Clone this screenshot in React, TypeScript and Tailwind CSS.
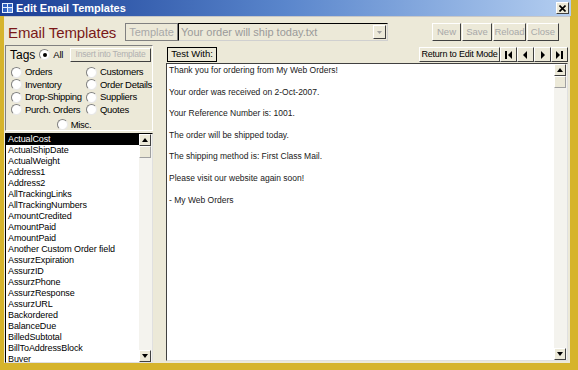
import React from "react";

const FONT = { fontFamily: '"Liberation Sans", Arial, sans-serif' };

const fields = [
  "ActualCost",
  "ActualShipDate",
  "ActualWeight",
  "Address1",
  "Address2",
  "AllTrackingLinks",
  "AllTrackingNumbers",
  "AmountCredited",
  "AmountPaid",
  "AmountPaid",
  "Another Custom Order field",
  "AssurzExpiration",
  "AssurzID",
  "AssurzPhone",
  "AssurzResponse",
  "AssurzURL",
  "Backordered",
  "BalanceDue",
  "BilledSubtotal",
  "BillToAddressBlock",
  "Buyer",
];

const lines = [
  "Thank you for ordering from My Web Orders!",
  "Your order was received on 2-Oct-2007.",
  "Your Reference Number is: 1001.",
  "The order will be shipped today.",
  "The shipping method is: First Class Mail.",
  "Please visit our website again soon!",
  "- My Web Orders",
];

function Radio({ checked, label }: { checked?: boolean; label: string }) {
  return (
    <div className="flex items-center gap-[3px] whitespace-nowrap">
      <span className="shrink-0 w-[11px] h-[11px] rounded-full bg-white border border-t-[#808080] border-l-[#808080] border-r-[#e8e8e8] border-b-[#e8e8e8] flex items-center justify-center">
        {checked && <span className="w-[4px] h-[4px] rounded-full bg-black" />}
      </span>
      <span className="text-[9.5px] tracking-[-0.3px] text-black leading-none">{label}</span>
    </div>
  );
}

function GrayButton({ label, w }: { label: string; w: string }) {
  return (
    <div
      className={`${w} h-[18px] flex items-center justify-center whitespace-nowrap border border-t-white border-l-white border-r-[#404040] border-b-[#404040] text-[9.5px] text-[#a8a8a8]`}
    >
      {label}
    </div>
  );
}

function NavButton({ kind }: { kind: "first" | "prev" | "next" | "last" }) {
  return (
    <div className="w-[17px] h-[15px] flex items-center justify-center border border-t-white border-l-white border-r-[#404040] border-b-[#404040] bg-[#ece9d8]">
      <svg width="9" height="8" viewBox="0 0 9 8">
        {kind === "first" && (
          <>
            <rect x="1" y="0" width="2" height="8" fill="#000" />
            <polygon points="8,0 8,8 4,4" fill="#000" />
          </>
        )}
        {kind === "prev" && <polygon points="6,0 6,8 2,4" fill="#000" />}
        {kind === "next" && <polygon points="3,0 3,8 7,4" fill="#000" />}
        {kind === "last" && (
          <>
            <polygon points="1,0 1,8 5,4" fill="#000" />
            <rect x="6" y="0" width="2" height="8" fill="#000" />
          </>
        )}
      </svg>
    </div>
  );
}

function ScrollArrow({ up }: { up?: boolean }) {
  return (
    <div className="w-[12px] h-[12px] bg-[#ece9d8] border border-t-white border-l-white border-r-[#404040] border-b-[#404040] flex items-center justify-center">
      <svg width="6" height="4" viewBox="0 0 6 4">
        <polygon points={up ? "0,4 6,4 3,0" : "0,0 6,0 3,4"} fill="#000" />
      </svg>
    </div>
  );
}

function ScrollBar() {
  return (
    <div className="w-[13px] shrink-0 flex flex-col bg-[#f4f3ee]">
      <ScrollArrow up />
      <div className="w-[12px] h-[12px] bg-[#ece9d8] border border-t-white border-l-white border-r-[#a0a0a0] border-b-[#a0a0a0]" />
      <div className="flex-1" />
      <ScrollArrow />
    </div>
  );
}

export default function App() {
  return (
    <div className="w-[578px] h-[370px] bg-[#d6b42c] overflow-hidden flex flex-col" style={FONT}>
      {/* title bar */}
      <div className="w-[571px] h-[16px] shrink-0 flex items-center bg-gradient-to-r from-[#1a3c94] via-[#5a86cc] to-[#b4cef0] px-[2px]">
        <svg width="11" height="10" viewBox="0 0 11 10" className="mr-[3px]">
          <rect x="0" y="0" width="11" height="10" fill="#e8f0ff" />
          <rect x="1" y="1" width="4" height="3" fill="#3060c0" />
          <rect x="6" y="1" width="4" height="3" fill="#3060c0" />
          <rect x="1" y="5" width="4" height="4" fill="#3060c0" />
          <rect x="6" y="5" width="4" height="4" fill="#6090e0" />
        </svg>
        <span className="text-[11px] font-bold text-white leading-none whitespace-nowrap">Edit Email Templates</span>
        <div className="ml-auto w-[13px] h-[12px] bg-[#ece9d8] border border-t-white border-l-white border-r-[#404040] border-b-[#404040] flex items-center justify-center">
          <svg width="7" height="7" viewBox="0 0 7 7">
            <path d="M0.5 0.5 L6.5 6.5 M6.5 0.5 L0.5 6.5" stroke="#000" strokeWidth="1.6" />
          </svg>
        </div>
      </div>

      {/* window body */}
      <div className="ml-[4px] w-[566px] h-[347px] bg-[#ece9d8] flex flex-col border-t border-[#c8c8c8]">
        {/* header row */}
        <div className="h-[26px] flex items-center pt-[4px]">
          <span className="ml-[4px] w-[117px] text-[15px] tracking-[-0.1px] text-[#7a1818] leading-none whitespace-nowrap">Email Templates</span>
          <div className="flex h-[18px] w-[263px]">
            <div className="w-[53px] flex items-center justify-center border border-[#808080] text-[11px] text-[#a8a8a8]">
              Template
            </div>
            <div className="flex-1 flex items-center border border-t-black border-l-black border-r-[#d0d0d0] border-b-[#d0d0d0] pl-[2px] text-[11px] text-[#9a9a9a] whitespace-nowrap">
              Your order will ship today.txt
              <div className="ml-auto mr-[1px] w-[13px] h-[14px] border border-t-white border-l-white border-r-[#404040] border-b-[#404040] flex items-center justify-center">
                <svg width="5" height="3" viewBox="0 0 5 3">
                  <polygon points="0,0 5,0 2.5,3" fill="#a0a0a0" />
                </svg>
              </div>
            </div>
          </div>
          <div className="ml-[44px] flex gap-[1px]">
            <GrayButton label="New" w="w-[29px]" />
            <GrayButton label="Save" w="w-[30px]" />
            <GrayButton label="Reload" w="w-[33px]" />
            <GrayButton label="Close" w="w-[32px]" />
          </div>
        </div>

        <div className="flex flex-1 mt-[2px]">
          {/* left panel */}
          <div className="w-[148px] ml-[1px] flex flex-col">
            <div className="h-[86px] border border-t-[#808080] border-l-[#808080] border-r-white border-b-white flex flex-col">
              <div className="flex items-center h-[16px] mt-[1px]">
                <span className="ml-[4px] text-[12px] leading-none text-black mr-[4px]">Tags</span>
                <Radio checked label="All" />
                <div className="ml-auto mr-[1px] w-[81px] h-[14px] border border-t-white border-l-white border-r-[#404040] border-b-[#404040] flex items-center justify-center text-[8.5px] tracking-[-0.2px] text-[#b0b0b0] whitespace-nowrap">
                  Insert into Template
                </div>
              </div>
              <div className="grid grid-cols-[75px_1fr] gap-y-[1.5px] mt-[4px] ml-[5px]">
                <Radio label="Orders" />
                <Radio label="Customers" />
                <Radio label="Inventory" />
                <Radio label="Order Details" />
                <Radio label="Drop-Shipping" />
                <Radio label="Suppliers" />
                <Radio label="Purch. Orders" />
                <Radio label="Quotes" />
              </div>
              <div className="flex justify-center mt-[4px] pr-[10px]">
                <Radio label="Misc." />
              </div>
            </div>
            <div className="mt-[2px] h-[230px] bg-white border border-t-black border-l-black border-r-[#e0e0e0] border-b-[#e0e0e0] flex">
              <div className="flex-1 flex flex-col overflow-hidden">
                {fields.map((f, i) => (
                  <div
                    key={i}
                    className={`h-[11px] shrink-0 pl-[2px] text-[9px] leading-[11px] whitespace-nowrap tracking-[-0.1px] ${
                      i === 0 ? "bg-black text-white" : "text-black"
                    }`}
                  >
                    {f}
                  </div>
                ))}
              </div>
              <ScrollBar />
            </div>
          </div>

          {/* right panel */}
          <div className="ml-[13px] w-[402px] flex flex-col">
            <div className="flex items-end h-[17px]">
              <div className="ml-[1px] w-[50px] h-[15px] border border-black flex items-center justify-center text-[9.5px] text-black bg-[#ece9d8] whitespace-nowrap">
                Test With:
              </div>
              <div className="ml-auto flex">
                <div className="w-[81px] h-[15px] border border-t-white border-l-white border-r-[#404040] border-b-[#404040] flex items-center justify-center text-[9px] text-black whitespace-nowrap tracking-[-0.2px]">
                  Return to Edit Mode
                </div>
                <NavButton kind="first" />
                <NavButton kind="prev" />
                <NavButton kind="next" />
                <NavButton kind="last" />
              </div>
            </div>
            <div className="mt-[1px] h-[298px] bg-white border border-t-[#404040] border-l-[#404040] border-r-[#e0e0e0] border-b-[#e0e0e0] flex">
              <div className="flex-1 pl-[2px] pt-[1px] text-[8.5px] leading-[10.8px] text-[#202020] whitespace-nowrap">
                {lines.map((l, i) => (
                  <React.Fragment key={i}>
                    <div className="h-[10.8px]">{l}</div>
                    <div className="h-[10.8px]" />
                  </React.Fragment>
                ))}
              </div>
              <ScrollBar />
            </div>
          </div>
        </div>
      </div>
    </div>
  );
}
